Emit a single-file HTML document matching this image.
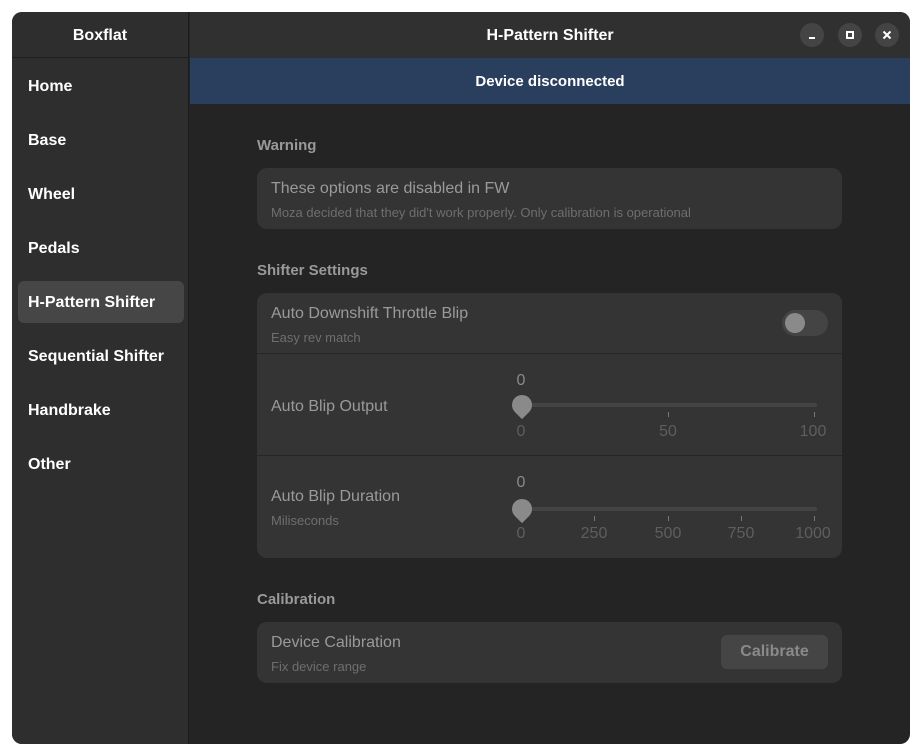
<!DOCTYPE html>
<html><head><style>
*{margin:0;padding:0;box-sizing:border-box}
body{width:922px;height:756px;background:#fff;font-family:"Liberation Sans",sans-serif;position:relative;overflow:hidden}
.win{position:absolute;left:12px;top:12px;width:898px;height:732px;border-radius:10px;overflow:hidden;background:#242424}
.side{position:absolute;left:0;top:0;width:177px;height:732px;background:#2e2e2e;border-right:1px solid #1c1c1c}
.sh{height:46px;border-bottom:1px solid #1f1f1f;color:#fff;font-weight:bold;font-size:16px;text-align:center;line-height:47px}
.nav{position:absolute;left:16px;color:#fff;font-weight:bold;font-size:16px}
.sel{position:absolute;left:6px;top:269px;width:166px;height:42px;background:#464646;border-radius:6px}
.hdr{position:absolute;left:178px;top:0;right:0;height:46px;background:#303030;color:#fff;font-weight:bold;font-size:16px;text-align:center;line-height:47px}
.btn{position:absolute;top:11px;width:24px;height:24px;border-radius:50%;background:#444}
.ban{position:absolute;left:178px;top:46px;right:0;height:46px;background:#2a3f5e;color:#fff;font-weight:bold;font-size:15px;text-align:center;line-height:47px}
.t{position:absolute;left:245px;color:#999;font-weight:bold;font-size:15px}
.card{position:absolute;left:245px;width:585px;background:#343434;border-radius:10px;overflow:hidden}
.row{position:relative;border-bottom:1px solid #262626}
.row:last-child{border-bottom:none}
.a{position:absolute;left:14px;color:#9a9a9a;font-size:16px}
.b{position:absolute;left:14px;color:#6e6e6e;font-size:13px}
.n{position:absolute;color:#5e5e5e;font-size:16px;transform:translateX(-50%)}
.track{position:absolute;left:262px;width:298px;height:4px;background:#444;border-radius:2px}
.tick{position:absolute;width:1px;height:5px;background:#777}
.knob{position:absolute;width:20px;height:20px;background:#8a8a8a;border-radius:50% 50% 50% 0;transform:rotate(-45deg)}
</style></head><body>
<div class="win">
<div class="side"><div class="sh">Boxflat</div>
<div class="sel"></div>
<div class="nav" style="top:66px">Home</div>
<div class="nav" style="top:120px">Base</div>
<div class="nav" style="top:174px">Wheel</div>
<div class="nav" style="top:228px">Pedals</div>
<div class="nav" style="top:282px">H-Pattern Shifter</div>
<div class="nav" style="top:336px">Sequential Shifter</div>
<div class="nav" style="top:390px">Handbrake</div>
<div class="nav" style="top:444px">Other</div>
</div>
<div class="hdr">H-Pattern Shifter
<div class="btn" style="left:610px"><div style="position:absolute;left:9px;top:14px;width:6px;height:2px;background:#fff"></div></div>
<div class="btn" style="left:648px"><div style="position:absolute;left:8px;top:8px;width:8px;height:8px;border:2px solid #fff"></div></div>
<div class="btn" style="left:685px"><svg width="24" height="24" style="position:absolute;left:0;top:0"><path d="M8.5 8.5L15.5 15.5M15.5 8.5L8.5 15.5" stroke="#fff" stroke-width="2"/></svg></div></div>
<div class="ban">Device disconnected</div>
<div class="t" style="top:125px">Warning</div>
<div class="card" style="top:156px;height:61px">
<div class="a" style="top:12px">These options are disabled in FW</div>
<div class="b" style="top:37px">Moza decided that they did't work properly. Only calibration is operational</div></div>
<div class="t" style="top:250px">Shifter Settings</div>
<div class="card" style="top:281px;height:265px">
<div class="row" style="height:61px"><div class="a" style="top:12px">Auto Downshift Throttle Blip</div><div class="b" style="top:37px">Easy rev match</div>
<div style="position:absolute;left:525px;top:17px;width:46px;height:26px;border-radius:13px;background:#444"><div style="position:absolute;left:3px;top:3px;width:20px;height:20px;border-radius:50%;background:#8a8a8a"></div></div></div>
<div class="row" style="height:102px"><div class="a" style="top:44px">Auto Blip Output</div>
<div class="n" style="left:264px;top:18px;color:#8a8a8a">0</div>
<div class="track" style="top:49px"></div>
<div class="knob" style="left:255px;top:41px"></div>
<div class="tick" style="left:411px;top:58px"></div><div class="tick" style="left:557px;top:58px"></div>
<div class="n" style="left:264px;top:69px">0</div><div class="n" style="left:411px;top:69px">50</div><div class="n" style="left:556px;top:69px">100</div></div>
<div class="row" style="height:102px"><div class="a" style="top:32px">Auto Blip Duration</div><div class="b" style="top:57px">Miliseconds</div>
<div class="n" style="left:264px;top:18px;color:#8a8a8a">0</div>
<div class="track" style="top:51px"></div>
<div class="knob" style="left:255px;top:43px"></div>
<div class="tick" style="left:337px;top:60px"></div><div class="tick" style="left:411px;top:60px"></div><div class="tick" style="left:484px;top:60px"></div><div class="tick" style="left:557px;top:60px"></div>
<div class="n" style="left:264px;top:69px">0</div><div class="n" style="left:337px;top:69px">250</div><div class="n" style="left:411px;top:69px">500</div><div class="n" style="left:484px;top:69px">750</div><div class="n" style="left:556px;top:69px">1000</div></div>
</div>
<div class="t" style="top:579px">Calibration</div>
<div class="card" style="top:610px;height:61px">
<div class="a" style="top:12px">Device Calibration</div><div class="b" style="top:37px">Fix device range</div>
<div style="position:absolute;left:464px;top:13px;width:107px;height:34px;border-radius:6px;background:#454545;color:#8a8a8a;font-weight:bold;font-size:16px;text-align:center;line-height:34px">Calibrate</div></div>
</div>
</body></html>
